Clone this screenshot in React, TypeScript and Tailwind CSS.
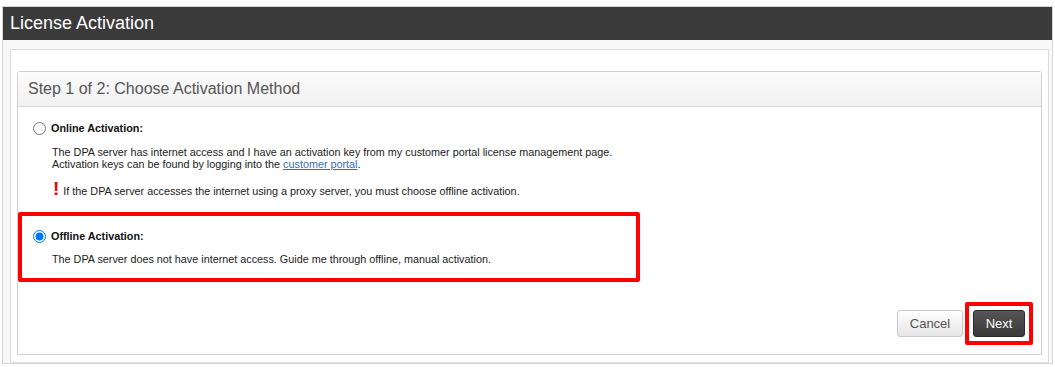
import React from "react";

function App() {
  const [method, setMethod] = React.useState("offline");
  return (
    <div className="w-[1055px] h-[367px] bg-white pt-[6px] pl-[2px] font-['Liberation_Sans',Arial,sans-serif] text-[#222]">
      <div className="w-[1051px] h-[358px] border border-[#d6d6d6] flex flex-col">
        {/* title bar */}
        <div className="h-[33px] shrink-0 bg-[#3a3a3a] text-white text-[18px] pl-[7px] flex items-center">
          License Activation
        </div>
        {/* body */}
        <div className="flex-1 bg-[#f8f8f8] pt-[9px] pl-[7px] pr-[3px]">
          <div className="h-[314px] bg-white border border-[#dcdcdc] pt-[21px] px-[6px]">
            {/* wizard panel */}
            <div className="h-[284px] border border-[#d0d0d0] rounded-t-[3px] flex flex-col">
              <div className="h-[35px] shrink-0 border-b border-[#d8d8d8] bg-gradient-to-b from-[#fbfbfb] to-[#f1f1f1] pl-[10px] flex items-center text-[16px] text-[#555]">
                Step 1 of 2: Choose Activation Method
              </div>
              <div className="flex-1 flex flex-col text-[10.8px]">
                {/* online */}
                <div className="pl-[15px] pt-[13px]">
                  <label className="flex items-center h-[16px]">
                    <input
                      type="radio"
                      name="method"
                      checked={method === "online"}
                      onChange={() => setMethod("online")}
                      className="m-0 w-[13px] h-[13px]"
                    />
                    <span className="ml-[5px] font-bold text-[#111]">Online Activation:</span>
                  </label>
                  <div className="ml-[19px] mt-[10px] leading-[12px]">
                    <p>The DPA server has internet access and I have an activation key from my customer portal license management page.</p>
                    <p>
                      Activation keys can be found by logging into the{" "}
                      <a href="#" className="text-[#3a6da8] underline">customer portal</a>.
                    </p>
                  </div>
                  <div className="ml-[20px] mt-[10px] flex items-end h-[18px]">
                    <span className="text-[#e00] font-bold text-[19px] leading-[18px]">!</span>
                    <span className="ml-[4px] leading-[14px]">If the DPA server accesses the internet using a proxy server, you must choose offline activation.</span>
                  </div>
                </div>
                {/* offline */}
                <div className="mt-[14px] w-[622px] h-[70px] border-4 border-[#f00] rounded-[2px] pl-[11px] pt-[12px]">
                  <label className="flex items-center h-[16px]">
                    <input
                      type="radio"
                      name="method"
                      checked={method === "offline"}
                      onChange={() => setMethod("offline")}
                      className="m-0 w-[13px] h-[13px]"
                    />
                    <span className="ml-[5px] font-bold text-[#111]">Offline Activation:</span>
                  </label>
                  <p className="ml-[19px] mt-[8px] leading-[14px]">
                    The DPA server does not have internet access. Guide me through offline, manual activation.
                  </p>
                </div>
                {/* buttons */}
                <div className="mt-auto mb-[9px] mr-[8px] flex justify-end items-center gap-[2px]">
                  <button className="w-[66px] h-[27px] rounded-[3px] border border-[#c8c8c8] bg-gradient-to-b from-white to-[#e6e6e6] text-[13px] text-[#555]">
                    Cancel
                  </button>
                  <div className="border-4 border-[#f00] rounded-[2px] p-[4px]">
                    <button className="block w-[52px] h-[27px] rounded-[3px] border border-[#2a2a2a] bg-gradient-to-b from-[#555] to-[#3a3a3a] text-[13px] text-white">
                      Next
                    </button>
                  </div>
                </div>
              </div>
            </div>
          </div>
        </div>
      </div>
    </div>
  );
}

export default App;
